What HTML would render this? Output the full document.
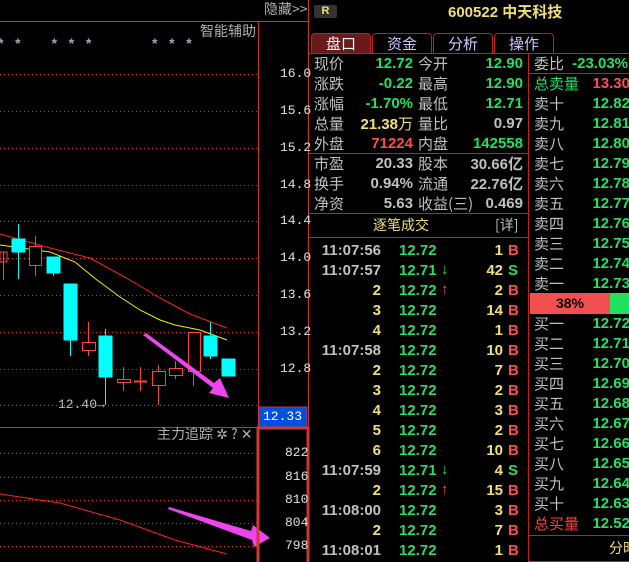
<!DOCTYPE html>
<html><head><meta charset="utf-8"><style>
*{margin:0;padding:0;box-sizing:border-box}
body{width:629px;height:562px;background:#000;overflow:hidden;position:relative;font-family:"Liberation Sans","Noto Sans CJK SC",sans-serif}
.a{position:absolute;white-space:nowrap;line-height:20px;height:20px}
.cn{font-family:"Noto Sans CJK SC","WenQuanYi Zen Hei",sans-serif;font-size:15px;color:#c0c0c0}
.n{font-family:"Liberation Sans",sans-serif;font-weight:bold;font-size:15px}
.g{color:#22e060}.r{color:#ff4d4d}.y{color:#f0e070}.w{color:#c0c0c0}
.hl{position:absolute;height:1px;background:#c02020}
.vl{position:absolute;width:1px;background:#c02020}
.ax{position:absolute;font-family:"Liberation Mono",monospace;font-size:13px;color:#e0e0e0;line-height:14px}
.tab{position:absolute;top:33px;height:21px;width:60px;border:1px solid #c02020;border-bottom:none;border-radius:4px 4px 0 0;text-align:center;font-family:"Noto Sans CJK SC",sans-serif;font-size:15px;line-height:20px;color:#c8c8ff}
.box{position:absolute;left:0;width:629px;height:0}
</style></head><body>
<svg width="310" height="562" style="position:absolute;left:0;top:0">
<g stroke="#d03030" stroke-dasharray="1,3" stroke-width="1">
<line x1="0" y1="74.5" x2="258" y2="74.5"/><line x1="0" y1="111.5" x2="258" y2="111.5"/><line x1="0" y1="148.5" x2="258" y2="148.5"/><line x1="0" y1="185.5" x2="258" y2="185.5"/><line x1="0" y1="221.5" x2="258" y2="221.5"/><line x1="0" y1="258.5" x2="258" y2="258.5"/><line x1="0" y1="295.5" x2="258" y2="295.5"/><line x1="0" y1="332.5" x2="258" y2="332.5"/><line x1="0" y1="369.5" x2="258" y2="369.5"/><line x1="0" y1="405.5" x2="258" y2="405.5"/>
<line x1="0" y1="453.5" x2="258" y2="453.5"/><line x1="0" y1="477.5" x2="258" y2="477.5"/><line x1="0" y1="500.5" x2="258" y2="500.5"/><line x1="0" y1="523.5" x2="258" y2="523.5"/><line x1="0" y1="546.5" x2="258" y2="546.5"/>
</g>
<polyline fill="none" stroke="#ff2020" stroke-width="1" points="0,234 50,248 90,258 130,280 160,298 190,314 227,328"/>
<polyline fill="none" stroke="#f0f000" stroke-width="1" points="0,245 50,252 75,262 97,280 120,297 140,310 160,320 175,325 200,330 227,340"/>
<g stroke="#ff4040" fill="none">
<line x1="3.5" y1="252" x2="3.5" y2="280"/><rect x="0" y="252" width="7" height="10" fill="none"/>
<line x1="35.5" y1="236" x2="35.5" y2="276"/><rect x="29.5" y="246.5" width="12" height="19" fill="#000"/>
<line x1="88.5" y1="322" x2="88.5" y2="356"/><rect x="82.5" y="342.5" width="13" height="8" fill="#000"/>
<line x1="123.5" y1="367" x2="123.5" y2="391"/><rect x="117.5" y="379.5" width="13" height="3" fill="#000"/>
<line x1="140.5" y1="367" x2="140.5" y2="391"/><line x1="134" y1="381.5" x2="147" y2="381.5" stroke-width="2"/>
<line x1="158.5" y1="365" x2="158.5" y2="405"/><rect x="152.5" y="371.5" width="13" height="14" fill="#000"/>
<line x1="175.5" y1="361" x2="175.5" y2="379"/><rect x="169.5" y="368.5" width="13" height="7" fill="#000"/>
<line x1="193.5" y1="332" x2="193.5" y2="386"/><rect x="188.5" y="332.5" width="12" height="39" fill="#000"/>
</g>
<g fill="#00ffff" stroke="#00ffff">
<line x1="18.5" y1="224" x2="18.5" y2="279"/><rect x="12" y="239" width="13" height="13"/>
<line x1="53.5" y1="257" x2="53.5" y2="276"/><rect x="47" y="257" width="13" height="16"/>
<line x1="70.5" y1="284" x2="70.5" y2="356"/><rect x="64" y="284" width="13" height="56"/>
<line x1="105.5" y1="329" x2="105.5" y2="405"/><rect x="99" y="336" width="13" height="41"/>
<line x1="210.5" y1="322" x2="210.5" y2="359"/><rect x="204" y="336" width="13" height="20"/>
<rect x="222" y="359" width="13" height="17"/>
</g>
<polygon fill="#ee44ee" points="143,335 146,333 214,383 220,378 229,398 209,393 213,388"/>
<polygon fill="#ee44ee" points="168,509 169,507 251,531 253,525 270,538 254,547 252,540"/>
<polyline fill="none" stroke="#ff2020" points="0,494 60,503 120,520 175,540 227,554"/>
<line x1="0" y1="21.5" x2="308" y2="21.5" stroke="#d03030"/>
<line x1="0" y1="427.5" x2="258" y2="427.5" stroke="#d03030"/>
<line x1="258.5" y1="21" x2="258.5" y2="427" stroke="#d03030"/>
<rect x="259" y="407" width="48" height="20" fill="#0050e0" stroke="#d03030"/>
<rect x="258" y="428" width="50" height="136" fill="none" stroke="#d03838" stroke-width="3"/>
<line x1="308.5" y1="0" x2="308.5" y2="562" stroke="#d03030"/>
</svg>
<div class="a cn" style="left:264px;top:-1px;font-size:14px;color:#b0b0b0">隐藏&gt;&gt;</div>
<div class="a cn" style="left:200px;top:21px;font-size:14px;color:#b0b0b0">智能辅助</div>
<div class="a" style="left:-2px;top:33px;color:#9ab;font-size:14px;font-weight:bold">*&nbsp;&nbsp;&nbsp;*&nbsp;&nbsp;&nbsp;&nbsp;&nbsp;&nbsp;&nbsp;&nbsp;*&nbsp;&nbsp;&nbsp;*&nbsp;&nbsp;&nbsp;*</div>
<div class="a" style="left:152px;top:33px;color:#9ab;font-size:14px;font-weight:bold">*&nbsp;&nbsp;&nbsp;*&nbsp;&nbsp;&nbsp;*</div>
<div class="ax" style="left:280px;top:67px">16.0</div><div class="ax" style="left:280px;top:104px">15.6</div><div class="ax" style="left:280px;top:141px">15.2</div><div class="ax" style="left:280px;top:178px">14.8</div><div class="ax" style="left:280px;top:214px">14.4</div><div class="ax" style="left:280px;top:251px">14.0</div><div class="ax" style="left:280px;top:288px">13.6</div><div class="ax" style="left:280px;top:325px">13.2</div><div class="ax" style="left:280px;top:362px">12.8</div>
<div class="ax" style="left:263px;top:410px;color:#fff">12.33</div>
<div class="ax" style="left:58px;top:398px;color:#c0c0c0">12.40→</div>
<div class="a cn" style="left:157px;top:424px;font-size:14px;color:#b0b0b0">主力追踪 ✲ ? ✕</div>
<div class="ax" style="left:285px;top:446px">822</div><div class="ax" style="left:285px;top:470px">816</div><div class="ax" style="left:285px;top:493px">810</div><div class="ax" style="left:285px;top:516px">804</div><div class="ax" style="left:285px;top:539px">798</div>
<div style="position:absolute;left:314px;top:5px;width:23px;height:13px;background:#333;border-radius:2px;color:#f0e070;font:bold 11px 'Liberation Sans';text-align:center;line-height:13px">R</div>
<div class="a n y" style="left:448px;top:2px;font-size:15px">600522 <span style="font-family:'Noto Sans CJK SC'">中天科技</span></div>
<div class="tab" style="left:311px;background:#6a1a1a;color:#fff">盘口</div>
<div class="tab" style="left:372px">资金</div><div class="tab" style="left:433px">分析</div><div class="tab" style="left:494px">操作</div>
<div class="hl" style="left:309px;top:53px;width:320px"></div>
<div class="vl" style="left:528px;top:53px;height:509px"></div>
<div class="hl" style="left:309px;top:153px;width:219px"></div>
<div class="hl" style="left:309px;top:213px;width:219px"></div>
<div class="hl" style="left:309px;top:237px;width:219px"></div>
<div class="hl" style="left:529px;top:73px;width:100px"></div>
<div class="hl" style="left:529px;top:535px;width:100px"></div>
<div class="hl" style="left:529px;top:561px;width:100px"></div>
<div class="box" style="top:54px">
<div class="a cn" style="left:314px;top:0">现价</div><div class="a n g" style="right:216px;top:0">12.72</div><div class="a cn" style="left:418px;top:0">今开</div><div class="a n g" style="right:106px;top:0">12.90</div>
<div class="a cn" style="left:314px;top:20px">涨跌</div><div class="a n g" style="right:216px;top:20px">-0.22</div><div class="a cn" style="left:418px;top:20px">最高</div><div class="a n g" style="right:106px;top:20px">12.90</div>
<div class="a cn" style="left:314px;top:40px">涨幅</div><div class="a n g" style="right:216px;top:40px">-1.70%</div><div class="a cn" style="left:418px;top:40px">最低</div><div class="a n g" style="right:106px;top:40px">12.71</div>
<div class="a cn" style="left:314px;top:60px">总量</div><div class="a n y" style="right:216px;top:60px">21.38<span style="font-family:'Noto Sans CJK SC';font-weight:normal">万</span></div><div class="a cn" style="left:418px;top:60px">量比</div><div class="a n w" style="right:106px;top:60px">0.97</div>
<div class="a cn" style="left:314px;top:80px">外盘</div><div class="a n r" style="right:216px;top:80px">71224</div><div class="a cn" style="left:418px;top:80px">内盘</div><div class="a n g" style="right:106px;top:80px">142558</div>
<div class="a cn" style="left:314px;top:100px">市盈</div><div class="a n w" style="right:216px;top:100px">20.33</div><div class="a cn" style="left:418px;top:100px">股本</div><div class="a n w" style="right:106px;top:100px">30.66<span class="cn">亿</span></div>
<div class="a cn" style="left:314px;top:120px">换手</div><div class="a n w" style="right:216px;top:120px">0.94%</div><div class="a cn" style="left:418px;top:120px">流通</div><div class="a n w" style="right:106px;top:120px">22.76<span class="cn">亿</span></div>
<div class="a cn" style="left:314px;top:140px">净资</div><div class="a n w" style="right:216px;top:140px">5.63</div><div class="a cn" style="left:418px;top:140px">收益(三)</div><div class="a n w" style="right:106px;top:140px">0.469</div>
</div>
<div class="a cn" style="left:373px;top:215px;color:#f0e070;font-size:14px">逐笔成交</div>
<div class="a cn" style="left:495px;top:215px;font-size:14px">[详]</div>
<div class="box" style="top:241px">
<div class="a n w" style="right:248px;top:0">11:07:56</div><div class="a n g" style="left:399px;top:0">12.72</div><div class="a n y" style="right:126px;top:0">1</div><div class="a n r" style="left:508px;top:0">B</div>
<div class="a n w" style="right:248px;top:20px">11:07:57</div><div class="a n g" style="left:399px;top:20px">12.71</div><div class="a n g" style="left:441px;top:19px">↓</div><div class="a n y" style="right:126px;top:20px">42</div><div class="a n g" style="left:508px;top:20px">S</div>
<div class="a n y" style="right:248px;top:40px">2</div><div class="a n g" style="left:399px;top:40px">12.72</div><div class="a n r" style="left:441px;top:39px">↑</div><div class="a n y" style="right:126px;top:40px">2</div><div class="a n r" style="left:508px;top:40px">B</div>
<div class="a n y" style="right:248px;top:60px">3</div><div class="a n g" style="left:399px;top:60px">12.72</div><div class="a n y" style="right:126px;top:60px">14</div><div class="a n r" style="left:508px;top:60px">B</div>
<div class="a n y" style="right:248px;top:80px">4</div><div class="a n g" style="left:399px;top:80px">12.72</div><div class="a n y" style="right:126px;top:80px">1</div><div class="a n r" style="left:508px;top:80px">B</div>
<div class="a n w" style="right:248px;top:100px">11:07:58</div><div class="a n g" style="left:399px;top:100px">12.72</div><div class="a n y" style="right:126px;top:100px">10</div><div class="a n r" style="left:508px;top:100px">B</div>
<div class="a n y" style="right:248px;top:120px">2</div><div class="a n g" style="left:399px;top:120px">12.72</div><div class="a n y" style="right:126px;top:120px">7</div><div class="a n r" style="left:508px;top:120px">B</div>
<div class="a n y" style="right:248px;top:140px">3</div><div class="a n g" style="left:399px;top:140px">12.72</div><div class="a n y" style="right:126px;top:140px">2</div><div class="a n r" style="left:508px;top:140px">B</div>
<div class="a n y" style="right:248px;top:160px">4</div><div class="a n g" style="left:399px;top:160px">12.72</div><div class="a n y" style="right:126px;top:160px">3</div><div class="a n r" style="left:508px;top:160px">B</div>
<div class="a n y" style="right:248px;top:180px">5</div><div class="a n g" style="left:399px;top:180px">12.72</div><div class="a n y" style="right:126px;top:180px">2</div><div class="a n r" style="left:508px;top:180px">B</div>
<div class="a n y" style="right:248px;top:200px">6</div><div class="a n g" style="left:399px;top:200px">12.72</div><div class="a n y" style="right:126px;top:200px">10</div><div class="a n r" style="left:508px;top:200px">B</div>
<div class="a n w" style="right:248px;top:220px">11:07:59</div><div class="a n g" style="left:399px;top:220px">12.71</div><div class="a n g" style="left:441px;top:219px">↓</div><div class="a n y" style="right:126px;top:220px">4</div><div class="a n g" style="left:508px;top:220px">S</div>
<div class="a n y" style="right:248px;top:240px">2</div><div class="a n g" style="left:399px;top:240px">12.72</div><div class="a n r" style="left:441px;top:239px">↑</div><div class="a n y" style="right:126px;top:240px">15</div><div class="a n r" style="left:508px;top:240px">B</div>
<div class="a n w" style="right:248px;top:260px">11:08:00</div><div class="a n g" style="left:399px;top:260px">12.72</div><div class="a n y" style="right:126px;top:260px">3</div><div class="a n r" style="left:508px;top:260px">B</div>
<div class="a n y" style="right:248px;top:280px">2</div><div class="a n g" style="left:399px;top:280px">12.72</div><div class="a n y" style="right:126px;top:280px">7</div><div class="a n r" style="left:508px;top:280px">B</div>
<div class="a n w" style="right:248px;top:300px">11:08:01</div><div class="a n g" style="left:399px;top:300px">12.72</div><div class="a n y" style="right:126px;top:300px">1</div><div class="a n r" style="left:508px;top:300px">B</div>
</div>
<div class="box" style="top:54px">
<div class="a cn" style="left:534px;top:0">委比</div><div class="a n g" style="right:1px;top:0">-23.03%</div>
<div class="a cn" style="left:534px;top:20px;color:#22e060">总卖量</div><div class="a n r" style="right:-1px;top:20px">13.30</div>
<div class="a cn" style="left:534px;top:40px">卖十</div><div class="a n g" style="right:-1px;top:40px">12.82</div>
<div class="a cn" style="left:534px;top:60px">卖九</div><div class="a n g" style="right:-1px;top:60px">12.81</div>
<div class="a cn" style="left:534px;top:80px">卖八</div><div class="a n g" style="right:-1px;top:80px">12.80</div>
<div class="a cn" style="left:534px;top:100px">卖七</div><div class="a n g" style="right:-1px;top:100px">12.79</div>
<div class="a cn" style="left:534px;top:120px">卖六</div><div class="a n g" style="right:-1px;top:120px">12.78</div>
<div class="a cn" style="left:534px;top:140px">卖五</div><div class="a n g" style="right:-1px;top:140px">12.77</div>
<div class="a cn" style="left:534px;top:160px">卖四</div><div class="a n g" style="right:-1px;top:160px">12.76</div>
<div class="a cn" style="left:534px;top:180px">卖三</div><div class="a n g" style="right:-1px;top:180px">12.75</div>
<div class="a cn" style="left:534px;top:200px">卖二</div><div class="a n g" style="right:-1px;top:200px">12.74</div>
<div class="a cn" style="left:534px;top:220px">卖一</div><div class="a n g" style="right:-1px;top:220px">12.73</div>
<div style="position:absolute;left:530px;top:239px;width:80px;height:21px;background:#f25050;color:#000;font:bold 14px 'Liberation Sans';text-align:center;line-height:21px">38%</div>
<div style="position:absolute;left:610px;top:239px;width:19px;height:21px;background:#20e060"></div>
<div class="a cn" style="left:534px;top:260px">买一</div><div class="a n g" style="right:-1px;top:260px">12.72</div>
<div class="a cn" style="left:534px;top:280px">买二</div><div class="a n g" style="right:-1px;top:280px">12.71</div>
<div class="a cn" style="left:534px;top:300px">买三</div><div class="a n g" style="right:-1px;top:300px">12.70</div>
<div class="a cn" style="left:534px;top:320px">买四</div><div class="a n g" style="right:-1px;top:320px">12.69</div>
<div class="a cn" style="left:534px;top:340px">买五</div><div class="a n g" style="right:-1px;top:340px">12.68</div>
<div class="a cn" style="left:534px;top:360px">买六</div><div class="a n g" style="right:-1px;top:360px">12.67</div>
<div class="a cn" style="left:534px;top:380px">买七</div><div class="a n g" style="right:-1px;top:380px">12.66</div>
<div class="a cn" style="left:534px;top:400px">买八</div><div class="a n g" style="right:-1px;top:400px">12.65</div>
<div class="a cn" style="left:534px;top:420px">买九</div><div class="a n g" style="right:-1px;top:420px">12.64</div>
<div class="a cn" style="left:534px;top:440px">买十</div><div class="a n g" style="right:-1px;top:440px">12.63</div>
<div class="a cn" style="left:534px;top:460px;color:#ff4040">总买量</div><div class="a n g" style="right:-1px;top:460px">12.52</div>
</div>
<div class="a cn" style="left:609px;top:538px;color:#f0e070;font-size:14px">分时</div>
</body></html>
